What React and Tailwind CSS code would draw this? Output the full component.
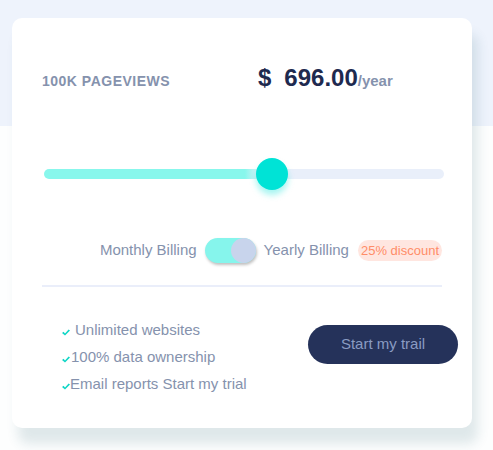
export default function App() {
  const features = [
    { text: "Unlimited websites", gap: "ml-[5px]" },
    { text: "100% data ownership", gap: "ml-[1px]" },
    { text: "Email reports Start my trial", gap: "ml-0" },
  ];

  return (
    <div className="w-[493px] h-[450px] pt-[18px] pl-[12px] bg-[linear-gradient(to_bottom,#eef3fc_0,#eef3fc_126px,#fdfefe_126px)] font-['Liberation_Sans',Arial,sans-serif]">
      <div className="w-[460px] h-[410px] bg-white rounded-[10px] pl-[30px] pr-[14px] shadow-[6px_16px_12px_rgba(40,100,110,0.14)]">
        {/* header */}
        <div className="flex items-baseline pt-[48px] leading-none">
          <div className="w-[216px] text-[14px] font-bold tracking-[0.5px] text-[#8592ad]">
            100K PAGEVIEWS
          </div>
          <div className="flex items-baseline text-[#1e2a4f] font-bold">
            <span className="text-[24px]">$</span>
            <span className="text-[24px] ml-[13px]">696.00</span>
            <span className="text-[15px] text-[#8592ad]">/year</span>
          </div>
        </div>

        {/* slider */}
        <div className="relative mt-[68px] ml-[2px] w-[400px] h-[32px] flex items-center">
          <div className="w-full h-[10px] rounded-full bg-[linear-gradient(to_right,#88f7ec_0,#88f7ec_201px,#e9effa_216px)]" />
          <div className="absolute left-[212px] top-0 w-[32px] h-[32px] rounded-full bg-[#00e3d6] shadow-[0_5px_6px_rgba(0,227,214,0.35)]" />
        </div>

        {/* billing */}
        <div className="mt-[48px] w-[400px] flex items-center justify-end text-[15px] text-[#8592ad]">
          <span>Monthly Billing</span>
          <div className="ml-[8px] w-[51px] h-[25px] rounded-full bg-[#86f5ec] flex justify-end shadow-[1px_2px_3px_rgba(0,0,0,0.25)]">
            <div className="w-[25px] h-[25px] rounded-full bg-[#c8d4ec]" />
          </div>
          <span className="ml-[8px]">Yearly Billing</span>
          <span className="ml-[9px] h-[21px] px-[3px] rounded-full bg-[#ffe6e0] text-[13px] text-[#ff8d68] flex items-center">
            25% discount
          </span>
        </div>

        <div className="mt-[22px] w-[400px] h-[2px] bg-[#eaeefa]" />

        {/* footer */}
        <div className="flex items-start pt-[29px]">
          <ul className="ml-[20px] text-[15px] leading-[27px] text-[#8592ad]">
            {features.map((f) => (
              <li key={f.text} className="flex items-center">
                <svg width="8" height="7" viewBox="0 0 8 7" className="mt-[5px]">
                  <path d="M0 4 L1.6 2.8 L3 4.4 L6.6 0.4 L8 1.6 L3 6.6 Z" fill="#10d6c6" />
                </svg>
                <span className={f.gap}>{f.text}</span>
              </li>
            ))}
          </ul>
          <button className="ml-auto mt-[9px] w-[150px] h-[39px] rounded-full bg-[#25325a] text-[15px] text-[#8a9bc2]">
            Start my trail
          </button>
        </div>
      </div>
    </div>
  );
}
